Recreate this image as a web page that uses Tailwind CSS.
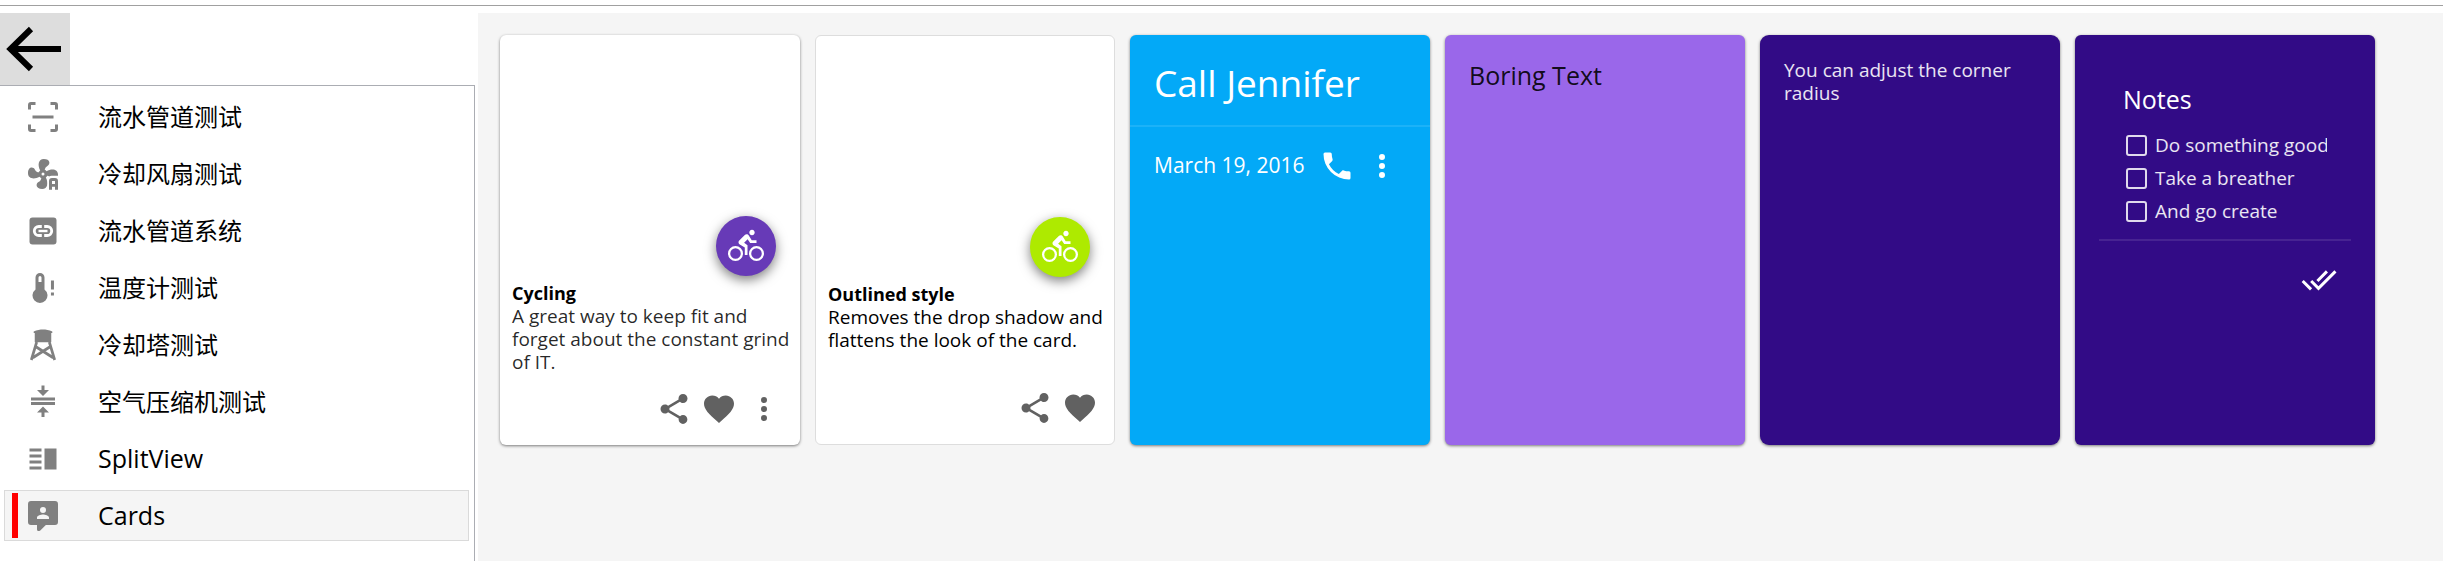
<!DOCTYPE html>
<html lang="zh-CN">
<head>
  <meta charset="UTF-8" />
  <meta name="viewport" content="width=device-width, initial-scale=1.0" />
  <title>Cards</title>
  <script src="https://cdn.jsdelivr.net/npm/@tailwindcss/browser@4"></script>
</head>
<body class="min-h-screen flex flex-col bg-white text-black font-['Open_Sans','Noto_Sans_CJK_SC',sans-serif]">
  <!-- Shared icons -->
  <svg class="hidden">
    <symbol id="bike" viewBox="0 0 24 24">
      <path d="M5 20.5A3.5 3.5 0 0 1 1.5 17A3.5 3.5 0 0 1 5 13.5A3.5 3.5 0 0 1 8.5 17A3.5 3.5 0 0 1 5 20.5M5 12A5 5 0 0 0 0 17A5 5 0 0 0 5 22A5 5 0 0 0 10 17A5 5 0 0 0 5 12M14.8 10H19V8.2H15.8L13.86 4.93C13.57 4.43 13 4.1 12.4 4.1C11.93 4.1 11.5 4.29 11.2 4.6L7.5 8.29C7.19 8.6 7 9 7 9.5C7 10.13 7.33 10.66 7.85 10.97L11.2 13V18H13V11.5L10.75 9.85L13.07 7.5M19 20.5A3.5 3.5 0 0 1 15.5 17A3.5 3.5 0 0 1 19 13.5A3.5 3.5 0 0 1 22.5 17A3.5 3.5 0 0 1 19 20.5M19 12A5 5 0 0 0 14 17A5 5 0 0 0 19 22A5 5 0 0 0 24 17A5 5 0 0 0 19 12M16 4.8C17 4.8 17.8 4 17.8 3C17.8 2 17 1.2 16 1.2C15 1.2 14.2 2 14.2 3C14.2 4 15 4.8 16 4.8Z" />
    </symbol>
    <symbol id="share" viewBox="0 0 24 24">
      <path d="M18 16.08c-.76 0-1.44.3-1.96.77L8.91 12.7c.05-.23.09-.46.09-.7s-.04-.47-.09-.7l7.05-4.11c.54.5 1.25.81 2.04.81 1.66 0 3-1.34 3-3s-1.34-3-3-3-3 1.34-3 3c0 .24.04.47.09.7L8.04 9.81C7.5 9.31 6.79 9 6 9c-1.66 0-3 1.34-3 3s1.34 3 3 3c.79 0 1.5-.31 2.04-.81l7.12 4.16c-.05.21-.08.43-.08.65 0 1.61 1.31 2.92 2.92 2.92s2.92-1.31 2.92-2.92-1.31-2.92-2.92-2.92z" />
    </symbol>
    <symbol id="heart" viewBox="0 0 24 24">
      <path d="M12 21.35l-1.45-1.32C5.4 15.36 2 12.28 2 8.5 2 5.42 4.42 3 7.5 3c1.74 0 3.41.81 4.5 2.09C13.09 3.81 14.76 3 16.5 3 19.58 3 22 5.42 22 8.5c0 3.78-3.4 6.86-8.55 11.54L12 21.35z" />
    </symbol>
    <symbol id="dots" viewBox="0 0 24 24">
      <path d="M12 16a2 2 0 1 1 0 4 2 2 0 0 1 0-4M12 10a2 2 0 1 1 0 4 2 2 0 0 1 0-4M12 4a2 2 0 1 1 0 4 2 2 0 0 1 0-4z" />
    </symbol>
  </svg>

  <div class="h-1.5 border-b border-[#a0a0a0]"></div>

  <div class="flex-1 flex mt-[7px]">
    <!-- Sidebar -->
    <aside class="w-[475px] mr-[3px] shrink-0 flex flex-col">
      <button class="w-[70px] h-[72px] bg-[#dddddd]" title="Back">
        <svg class="w-[70px] h-[72px]" viewBox="0 0 70 72" fill="none" stroke="#000" stroke-width="6">
          <path d="M31 16L10.500 36L31 56M10 36H61" />
        </svg>
      </button>
      <nav class="flex-1 border-t border-r border-[#abadb3] pt-[5px] pl-1 pr-[5px] flex flex-col gap-1.5 text-2xl">
        <a href="#" class="h-[51px] pl-[21px] flex items-center gap-[37px]">
          <svg class="size-9 fill-[#808080]" viewBox="0 0 24 24"><path d="M4 4H7V2H4A2 2 0 0 0 2 4V7H4V4M4 17H2V20A2 2 0 0 0 4 22H7V20H4V17M20 7H22V4A2 2 0 0 0 20 2H17V4H20V7M20 20H17V22H20A2 2 0 0 0 22 20V17H20V20M5 11V13H19V11Z" /></svg>
          流水管道测试
        </a>
        <a href="#" class="h-[51px] pl-[21px] flex items-center gap-[37px]">
          <svg class="size-9 fill-[#808080]" viewBox="0 0 24 24">
            <path d="M12 11A1 1 0 0 0 11 12A1 1 0 0 0 12 13A1 1 0 0 0 13 12A1 1 0 0 0 12 11M12.500 2C17 2 17.110 5.570 14.750 6.750C13.760 7.240 13.320 8.290 13.130 9.220C13.610 9.420 14.030 9.730 14.350 10.130C18.050 8.130 22.030 8.920 22.030 12.500C22.030 17 18.460 17.100 17.280 14.730C16.780 13.740 15.720 13.300 14.790 13.110C14.590 13.590 14.280 14 13.880 14.340C15.870 18.030 15.080 22 11.500 22C7 22 6.910 18.420 9.270 17.240C10.250 16.750 10.690 15.710 10.890 14.790C10.400 14.590 9.970 14.270 9.650 13.870C5.960 15.850 2 15.070 2 11.500C2 7 5.560 6.890 6.740 9.260C7.240 10.250 8.290 10.680 9.220 10.870C9.410 10.390 9.730 9.970 10.140 9.650C8.150 5.960 8.940 2 12.500 2Z" />
            <path fill="#fff" d="M15 23V16a2.800 2.800 0 0 1 2.800-2.800H23V23Z" />
            <path d="M18 14.600h2a2 2 0 0 1 2 2V22.500h-2V20.500h-2V22.500h-2V16.600a2 2 0 0 1 2-2M18 16.600V18.600H20V16.600Z" />
          </svg>
          冷却风扇测试
        </a>
        <a href="#" class="h-[51px] pl-[21px] flex items-center gap-[37px]">
          <svg class="size-9" viewBox="0 0 24 24">
            <rect x="3" y="3" width="18" height="18" rx="2" fill="#808080" />
            <path d="M11.200 9H9.200a3 3 0 0 0 0 6h2M12.800 9h2a3 3 0 0 1 0 6h-2" fill="none" stroke="#fff" stroke-width="1.900" />
            <path d="M9 11.200H15V12.800H9Z" fill="#fff" />
          </svg>
          流水管道系统
        </a>
        <a href="#" class="h-[51px] pl-[21px] flex items-center gap-[37px]">
          <svg class="size-9 fill-[#808080]" viewBox="0 0 24 24"><path fill-rule="evenodd" d="M13 13V5A3 3 0 0 0 7 5V13A5 5 0 1 0 13 13M10 4A1 1 0 0 1 11 5V8H9V5A1 1 0 0 1 10 4ZM17.300 7H19.300V13H17.300ZM17.300 15H19.300V17H17.300Z" /></svg>
          温度计测试
        </a>
        <a href="#" class="h-[51px] pl-[21px] flex items-center gap-[37px]">
          <svg class="size-9 fill-[#808080]" viewBox="0 0 24 24">
            <path d="M5.800 4V3C8 2 10 1.700 12 1.700S16 2 18.200 3V4H17.500V10.200H6.500V4Z" />
            <path d="M7.800 10L4.200 22M16.200 10L19.800 22M7 13L18.800 20.500M17 13L5.200 20.500" fill="none" stroke="#808080" stroke-width="1.800" />
          </svg>
          冷却塔测试
        </a>
        <a href="#" class="h-[51px] pl-[21px] flex items-center gap-[37px]">
          <svg class="size-9 fill-[#808080]" viewBox="0 0 24 24"><path d="M4 12H20V14H4V12M4 9H20V11H4V9M16 4L12 8L8 4H11V1H13V4H16M8 19L12 15L16 19H13V22H11V19H8Z" /></svg>
          空气压缩机测试
        </a>
        <a href="#" class="h-[51px] pl-[21px] flex items-center gap-[37px] text-[25px]">
          <svg class="size-9 fill-[#808080]" viewBox="0 0 24 24"><path d="M3 15h8v-2H3v2zm0 4h8v-2H3v2zm0-8h8V9H3v2zm0-6v2h8V5H3zm10 0h8v14h-8V5z" /></svg>
          SplitView
        </a>
        <a href="#" class="h-[51px] pl-[7px] flex items-center bg-[#f5f5f5] border border-[#dadada] text-[25px]" aria-current="page">
          <span class="w-1.5 h-[45px] mr-[7px] bg-[#ff0000]"></span>
          <svg class="size-9 mr-[37px] fill-[#808080]" viewBox="0 0 24 24"><path fill-rule="evenodd" d="M20 2H4A2 2 0 0 0 2 4V16A2 2 0 0 0 4 18H8V21A1 1 0 0 0 9 22H9.500C9.750 22 10 21.900 10.200 21.700L13.900 18H20A2 2 0 0 0 22 16V4A2 2 0 0 0 20 2M12 6a2 2 0 0 1 0 4a2 2 0 0 1 0-4M16 14H8V13C8 11.670 10.670 11 12 11S16 11.670 16 13Z" /></svg>
          Cards
        </a>
      </nav>
    </aside>

    <!-- Cards -->
    <main class="flex-1 bg-[#f5f5f5] p-[22px] flex flex-wrap content-start gap-[15px] text-[19px]/[23px]">
      <article class="w-[300px] h-[410px] bg-white rounded-md shadow-[0_1px_3px_rgba(0,0,0,0.5)] flex flex-col">
        <div class="h-[241px] pr-6 shrink-0 flex items-end justify-end">
          <button class="size-[60px] rounded-full bg-[#673ab7] flex items-center justify-center shadow-[0_4px_12px_rgba(0,0,0,0.5)]" title="Cycling">
            <svg class="size-9 fill-white"><use href="#bike" /></svg>
          </button>
        </div>
        <div class="pl-3 pr-2 pt-1.5">
          <h2 class="text-lg/[23px] font-bold">Cycling</h2>
          <p class="text-black/85">A great way to keep fit and forget about the constant grind of IT.</p>
        </div>
        <div class="mt-auto px-3.5 pb-3.5 flex justify-end">
          <button class="size-[45px] flex items-center justify-center" title="Share"><svg class="size-9 fill-[#616161]"><use href="#share" /></svg></button>
          <button class="size-[45px] flex items-center justify-center" title="Like"><svg class="size-9 fill-[#616161]"><use href="#heart" /></svg></button>
          <button class="size-[45px] flex items-center justify-center" title="More"><svg class="size-9 fill-[#616161]"><use href="#dots" /></svg></button>
        </div>
      </article>

      <article class="w-[300px] h-[410px] bg-white rounded-md border border-[#dddddd] flex flex-col">
        <div class="h-[241px] pr-6 shrink-0 flex items-end justify-end">
          <button class="size-[60px] rounded-full bg-[#aeea00] flex items-center justify-center shadow-[0_4px_12px_rgba(0,0,0,0.5)]" title="Cycling">
            <svg class="size-9 fill-white"><use href="#bike" /></svg>
          </button>
        </div>
        <div class="pl-3 pr-2 pt-1.5">
          <h2 class="text-lg/[23px] font-bold">Outlined style</h2>
          <p>Removes the drop shadow and flattens the look of the card.</p>
        </div>
        <div class="mt-auto pr-3 pb-3.5 flex justify-end">
          <button class="size-[45px] flex items-center justify-center" title="Share"><svg class="size-9 fill-[#616161]"><use href="#share" /></svg></button>
          <button class="size-[45px] flex items-center justify-center" title="Like"><svg class="size-9 fill-[#616161]"><use href="#heart" /></svg></button>
        </div>
      </article>

      <article class="w-[300px] h-[410px] bg-[#03a9f7] text-white rounded-md shadow-[0_1px_3px_rgba(0,0,0,0.5)]">
        <h2 class="px-6 pt-[27px] pb-[22px] text-[37px]/[41px]">Call Jennifer</h2>
        <hr class="border-t-2 border-white/10" />
        <div class="pl-6 pr-[26px] pt-4 flex items-center text-[21px]">
          <span class="flex-1 whitespace-nowrap">March 19, 2016</span>
          <button class="size-[45px] flex items-center justify-center" title="Call">
            <svg class="size-9 fill-white" viewBox="0 0 24 24"><path d="M6.620 10.790C8.060 13.620 10.380 15.940 13.210 17.380L15.410 15.180C15.690 14.900 16.080 14.820 16.430 14.930C17.550 15.300 18.750 15.500 20 15.500A1 1 0 0 1 21 16.500V20A1 1 0 0 1 20 21A17 17 0 0 1 3 4A1 1 0 0 1 4 3H7.500A1 1 0 0 1 8.500 4C8.500 5.250 8.700 6.450 9.070 7.570C9.180 7.920 9.100 8.310 8.820 8.590L6.620 10.790Z" /></svg>
          </button>
          <button class="size-[45px] flex items-center justify-center" title="More"><svg class="size-9 fill-white"><use href="#dots" /></svg></button>
        </div>
      </article>

      <article class="w-[300px] h-[410px] bg-[#9a67ea] rounded-md shadow-[0_1px_3px_rgba(0,0,0,0.5)] p-6">
        <p class="text-[25px]/[32px] text-black/90">Boring Text</p>
      </article>

      <article class="w-[300px] h-[410px] bg-[#320b86] text-white/90 rounded-[9px] shadow-[0_1px_3px_rgba(0,0,0,0.5)] p-6">
        <p>You can adjust the corner radius</p>
      </article>

      <article class="w-[300px] h-[410px] bg-[#320b86] text-white/90 rounded-md shadow-[0_1px_3px_rgba(0,0,0,0.5)] p-6">
        <div class="px-6 pt-6 pb-4">
          <h2 class="text-[25px]/[32px] text-white">Notes</h2>
          <div class="pt-[19px] pl-[3px] flex flex-col gap-2.5 whitespace-nowrap">
            <label class="flex items-center gap-2 overflow-x-clip"><input type="checkbox" class="appearance-none size-[21px] shrink-0 rounded-[3px] border-2 border-white/85" />Do something good</label>
            <label class="flex items-center gap-2 overflow-x-clip"><input type="checkbox" class="appearance-none size-[21px] shrink-0 rounded-[3px] border-2 border-white/85" />Take a breather</label>
            <label class="flex items-center gap-2 overflow-x-clip"><input type="checkbox" class="appearance-none size-[21px] shrink-0 rounded-[3px] border-2 border-white/85" />And go create</label>
          </div>
        </div>
        <hr class="border-t-2 border-white/10" />
        <div class="pt-4 pr-2.5 flex justify-end">
          <button class="size-[45px] flex items-center justify-center" title="Done">
            <svg class="size-9 fill-white" viewBox="0 0 24 24"><path d="M.410 13.410L6 19L7.410 17.580L1.830 12M22.240 5.580L11.660 16.170L7.500 12L6.070 13.410L11.660 19L23.660 7M18 7L16.590 5.580L10.240 11.930L11.660 13.340L18 7Z" /></svg>
          </button>
        </div>
      </article>
    </main>
  </div>
</body>
</html>
